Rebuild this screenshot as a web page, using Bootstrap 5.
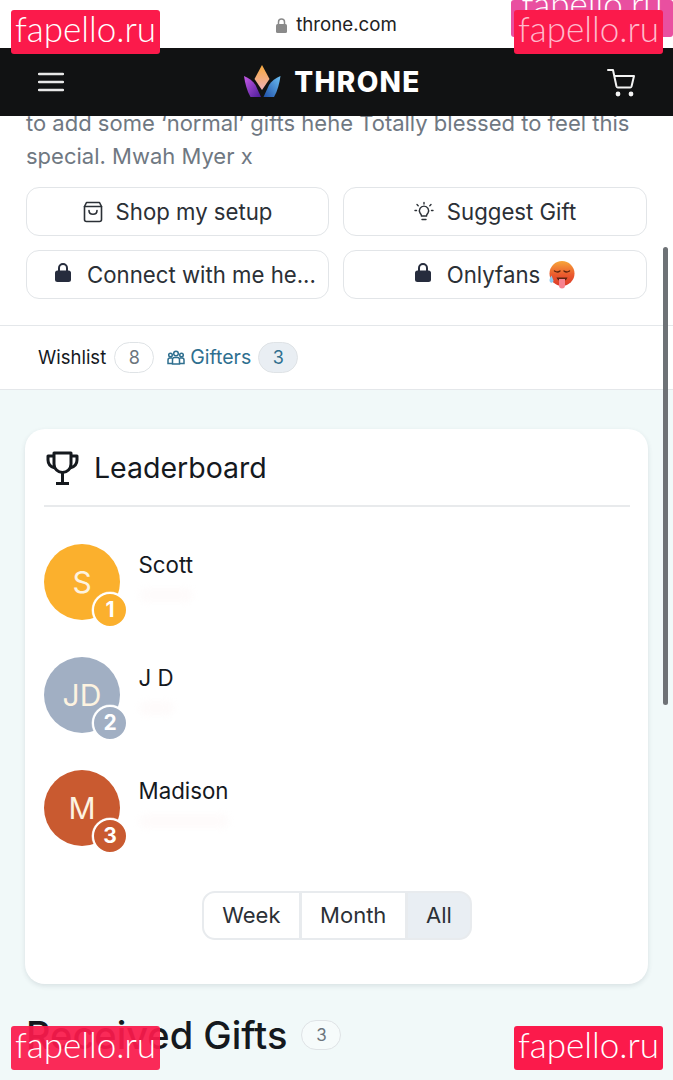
<!DOCTYPE html>
<html lang="en">
<head>
  <meta charset="UTF-8" />
  <meta name="viewport" content="width=device-width, initial-scale=1" />
  <title>Throne</title>
  <link href="https://cdn.jsdelivr.net/npm/bootstrap@5.3.0/dist/css/bootstrap.min.css" rel="stylesheet"/>

  <style>
    html, body { height: 1080px; overflow: hidden; }
    body {
      position: relative;
      font-family: Inter, "Liberation Sans", sans-serif;
      color: #15191e;
      background: #fff;
    }
    .url-bar { height: 48px; font-size: 18.7px; color: #222; padding-top: 3px; }
    .url-bar svg { margin-right: 9px; }
    .top-nav { height: 68px; background: #111213; padding: 0 36px 0 38px; position: relative; z-index: 2; }
    .brand { font-size: 28px; font-weight: 800; color: #fff; letter-spacing: 1.3px; gap: 13px; margin-right: 6px; }
    .bio { margin: -9px 26px 0; font-size: 22px; line-height: 33px; color: #6f7882; }
    .link-grid { display: grid; grid-template-columns: 303px 304px; gap: 14px; margin: 14px 26px 0 26px; }
    .link-btn {
      height: 49px; border: 1px solid #e2e5e8; border-radius: 13px; background: #fff;
      color: #2b3036; font-size: 22.2px; gap: 13px;
    }
    .link-btn span { white-space: nowrap; display: inline-flex; align-items: center; }
    .link-locked { gap: 16px; }
    .link-locked > svg { margin-bottom: 4px; }
    .tab-row {
      margin-top: 26px; height: 65px; padding-left: 38px; font-size: 18.5px;
      border-top: 1px solid #e4e7ea; border-bottom: 1px solid #e4e7ea;
    }
    .count-pill {
      display: inline-flex; align-items: center; justify-content: center;
      width: 40px; height: 31px; border: 1px solid #dfe3e6; border-radius: 16px;
      color: #6c757d; font-size: 18px; background: #fff;
    }
    .tab-gifters { color: #2f6f8f; margin-left: 13px; font-size: 19.5px; }
    .tab-gifters svg { margin-right: 5px; }
    .tab-gifters .count-pill { background: #e9eef3; color: #2f6f8f; margin-left: 7px; }
    .page-lower { background: #f1f9f9; height: 690px; padding: 39px 25px 0; }
    .board-card {
      height: 555px; border: 0; border-radius: 20px; background: #fff;
      box-shadow: 0 2px 5px rgba(40, 60, 70, .12); padding: 0 18px 0 19px;
    }
    .board-head { height: 78px; border-bottom: 2px solid #e8eaec; font-size: 28.5px; gap: 15px; padding: 2px 0 0 2px; }
    .board-list { margin-top: 37px; display: flex; flex-direction: column; gap: 37px; }
    .face {
      width: 76px; height: 76px; border-radius: 50%; color: #fdf3e0;
      font-size: 30px; position: relative; flex: none;
    }
    .rank {
      position: absolute; right: -8px; bottom: -8px; width: 36px; height: 36px;
      border-radius: 50%; border: 2px solid #fff; font-size: 21px; font-weight: 700; color: #fff;
      background: inherit; display: flex; align-items: center; justify-content: center;
      box-shadow: 0 0 0 .5px rgba(255, 255, 255, .6);
    }
    .face-gold { background: #fbb02d; }
    .face-grey { background: #a1afc3; }
    .face-rust { background: #c95a30; }
    .who { margin-left: 18.5px; font-size: 22.3px; line-height: 26px; padding-top: 8px; }
    .smudge { height: 14px; margin-top: 10px; background: #fefbfb; border-radius: 7px; filter: blur(3px); }
    .period { margin-top: 45px; }
    .period .btn {
      font-size: 22px; color: #2b3036; height: 49px; padding: 0 18.3px; background: #fff;
      border: 2px solid #e8ebee; --bs-btn-border-radius: 13px;
    }
    .period .btn.active { background: #e9eef3; color: #2b3036; border-color: #e8ebee; }
    .gifts-title { margin: 29px 0 0 1px; font-size: 38px; line-height: 44px; font-weight: 500; color: #15191e; gap: 14px; }
    .gifts-title .count-pill { width: 40px; height: 30px; font-size: 17px; background: #f6fbfb; font-weight: 400; }
    .scroll-thumb { position: absolute; left: 663px; top: 247px; width: 5px; height: 458px; background: #6e7276; border-radius: 3px; }
    .stamp {
      position: absolute; width: 149px; height: 44px; background: #fb1a4b; color: #fff; border-radius: 3px;
      font-size: 35px; line-height: 36px; text-align: center; font-family: Lato, sans-serif; font-weight: 300; z-index: 5;
    }
    .stamp-tl { left: 11px; top: 10px; }
    .stamp-tr { left: 514px; top: 10px; color: #ffb9cb; }
    .stamp-bl { left: 11px; top: 1026px; background: rgba(251, 26, 75, .93); }
    .stamp-br { left: 514px; top: 1026px; }
    .stamp-ghost { left: 511px; top: 0; width: 162px; height: 37px; background: #e94fa0; z-index: 4; line-height: 6px; }
  </style>
</head>

<body>
  <div class="url-bar d-flex align-items-center justify-content-center">
    <svg width="11" height="15" viewBox="0 0 11 15"><path d="M2.500 6V4a3 3 0 0 1 6 0v2" fill="none" stroke="#8a8a8a" stroke-width="1.500"/><rect y="6" width="11" height="9" rx="1.500" fill="#8a8a8a"/></svg>
    throne.com
  </div>

  <nav class="top-nav d-flex align-items-center justify-content-between">
    <svg width="26" height="20" viewBox="0 0 26 20"><path d="M1 2h24M1 10h24M1 18h24" stroke="#e8e8e8" stroke-width="2.400" stroke-linecap="round"/></svg>
    <div class="brand d-flex align-items-center">
      <svg width="37" height="34" viewBox="0 0 37 34">
        <defs>
          <linearGradient id="gc" x1="0" y1="0" x2="0" y2="1"><stop offset="0" stop-color="#f6a83c"/><stop offset="1" stop-color="#eeb0b8"/></linearGradient>
          <linearGradient id="gl" x1="0" y1="0" x2="1" y2="1"><stop offset="0" stop-color="#c85ae8"/><stop offset="1" stop-color="#4a1c98"/></linearGradient>
          <linearGradient id="gr" x1="1" y1="0" x2="0" y2="1"><stop offset="0" stop-color="#6cc0f4"/><stop offset="1" stop-color="#1f4fa8"/></linearGradient>
        </defs>
        <path d="M18 0l7.500 14L18 25l-7.500-11z" fill="url(#gc)"/>
        <path d="M0 11c5 2 9 5 11.500 9l5.500 12H6.500C3 26 1 18 0 11z" fill="url(#gl)"/>
        <path d="M36.500 11c-5 2-9 5-11.500 9l-5.500 12H30c3.500-6 5.500-14 6.500-21z" fill="url(#gr)"/>
      </svg>
      THRONE
    </div>
    <svg width="30" height="30" viewBox="0 0 30 30" fill="none" stroke="#f4f4f4" stroke-width="2" stroke-linecap="round" stroke-linejoin="round"><path d="M1 3h5l3.500 16.500a1.500 1.500 0 0 0 1.500 1h12a1.500 1.500 0 0 0 1.500-1L27 9H7.500"/><circle cx="11" cy="27" r="1.400" fill="#f4f4f4"/><circle cx="24" cy="27" r="1.400" fill="#f4f4f4"/></svg>
  </nav>

  <p class="bio mb-0">to add some ‘normal’ gifts hehe Totally blessed to feel this special. Mwah Myer x</p>

  <div class="link-grid">
    <a class="link-btn d-flex align-items-center justify-content-center text-decoration-none">
      <svg width="20" height="22" viewBox="0 0 20 22" fill="none" stroke="#2b3036" stroke-width="1.600" stroke-linejoin="round" stroke-linecap="round"><path d="M3.500 1.500h13l2 4v13a2 2 0 0 1-2 2h-13a2 2 0 0 1-2-2v-13z"/><path d="M1.500 5.500h17M6 9.500c0 5 8 5 8 0"/></svg>
      <span>Shop my setup</span>
    </a>
    <a class="link-btn d-flex align-items-center justify-content-center text-decoration-none">
      <svg width="20" height="22" viewBox="0 0 20 22" fill="none" stroke="#2b3036" stroke-width="1.400" stroke-linecap="round"><path d="M6 12a4.600 4.600 0 1 1 8 0c-.8 1-1.400 1.600-1.500 3h-5C7.400 13.600 6.800 13 6 12zM8 18.500h4"/><path d="M10 1.500v1.500M3 3.500l1.200 1.200M17 3.500l-1.200 1.200M1 9.500h1.500M17.500 9.500H19"/></svg>
      <span>Suggest Gift</span>
    </a>
    <a class="link-btn link-locked d-flex align-items-center justify-content-center text-decoration-none ps-3">
      <svg width="16" height="19" viewBox="0 0 16 19"><path d="M4 8V5a4 4 0 0 1 8 0v3" fill="none" stroke="#262c3d" stroke-width="2"/><rect y="7.500" width="16" height="11.500" rx="2.500" fill="#262c3d"/></svg>
      <span>Connect with me he...</span>
    </a>
    <a class="link-btn link-locked d-flex align-items-center justify-content-center text-decoration-none">
      <svg width="16" height="19" viewBox="0 0 16 19"><path d="M4 8V5a4 4 0 0 1 8 0v3" fill="none" stroke="#262c3d" stroke-width="2"/><rect y="7.500" width="16" height="11.500" rx="2.500" fill="#262c3d"/></svg>
      <span>Onlyfans
      <svg class="ms-2" width="27" height="29" viewBox="0 0 27 29">
        <defs><linearGradient id="hot" x1="0" y1="0" x2="0" y2="1"><stop offset="0" stop-color="#f7a63a"/><stop offset=".55" stop-color="#ea5a2e"/><stop offset="1" stop-color="#dc3a28"/></linearGradient></defs>
        <circle cx="14" cy="13.500" r="12.500" fill="url(#hot)"/>
        <path d="M6.500 11q3 2 5.500 0M16 11q2.500 2 5.500 0" fill="none" stroke="#5e2410" stroke-width="1.400" stroke-linecap="round"/>
        <path d="M8.500 17.500h11q-1 3.500-5.500 3.500t-5.500-3.500z" fill="#5e2410"/>
        <path d="M11 19h6v6.500a3 3 0 0 1-6 0z" fill="#f7828f"/>
        <path d="M3.500 15.500q-3 4-1.500 6.500a2 2 0 0 0 3.500-1.500z" fill="#8cc8ee"/>
      </svg></span>
    </a>
  </div>

  <div class="tab-row d-flex align-items-center">
    <span>Wishlist</span>
    <span class="count-pill ms-2">8</span>
    <span class="tab-gifters d-flex align-items-center">
      <svg width="18" height="15" viewBox="0 0 18 15" fill="none" stroke="#2f6f8f" stroke-width="1.500"><circle cx="9" cy="3.500" r="2.300"/><circle cx="3.500" cy="5" r="1.800"/><circle cx="14.500" cy="5" r="1.800"/><path d="M5.500 14V9.500a2 2 0 0 1 2-2h3a2 2 0 0 1 2 2V14zM5.500 13.500H1V10a2 2 0 0 1 2-2h2M12.500 13.500H17V10a2 2 0 0 0-2-2h-2"/></svg>
      <span>Gifters</span>
      <span class="count-pill">3</span>
    </span>
  </div>

  <div class="page-lower">
    <div class="card board-card">
      <div class="board-head d-flex align-items-center">
        <svg width="33" height="34" viewBox="0 0 33 34" fill="none" stroke="#15191e" stroke-width="3" stroke-linejoin="round"><path d="M8 2h17v11a8.500 8.500 0 0 1-17 0z"/><path d="M8 5H2v4c0 4 3 7 7 8M25 5h6v4c0 4-3 7-7 8M16.500 22v10M10 32.500h13"/></svg>
        <span>Leaderboard</span>
      </div>

      <div class="board-list">
        <div class="d-flex">
          <div class="face face-gold d-flex align-items-center justify-content-center">S<span class="rank">1</span></div>
          <div class="who">Scott<div class="smudge"></div></div>
        </div>
        <div class="d-flex">
          <div class="face face-grey d-flex align-items-center justify-content-center">JD<span class="rank">2</span></div>
          <div class="who">J D<div class="smudge"></div></div>
        </div>
        <div class="d-flex">
          <div class="face face-rust d-flex align-items-center justify-content-center">M<span class="rank">3</span></div>
          <div class="who">Madison<div class="smudge"></div></div>
        </div>
      </div>

      <div class="period d-flex justify-content-center">
        <div class="btn-group" role="group">
          <button type="button" class="btn">Week</button>
          <button type="button" class="btn">Month</button>
          <button type="button" class="btn active">All</button>
        </div>
      </div>
    </div>

    <h2 class="gifts-title d-flex align-items-center">Received Gifts <span class="count-pill">3</span></h2>
  </div>

  <div class="scroll-thumb"></div>
  <div class="stamp stamp-ghost">fapello.ru</div>
  <div class="stamp stamp-tl">fapello.ru</div>
  <div class="stamp stamp-tr">fapello.ru</div>
  <div class="stamp stamp-bl">fapello.ru</div>
  <div class="stamp stamp-br">fapello.ru</div>

  <script src="https://cdn.jsdelivr.net/npm/bootstrap@5.3.0/dist/js/bootstrap.bundle.min.js"></script>
</body>
</html>
